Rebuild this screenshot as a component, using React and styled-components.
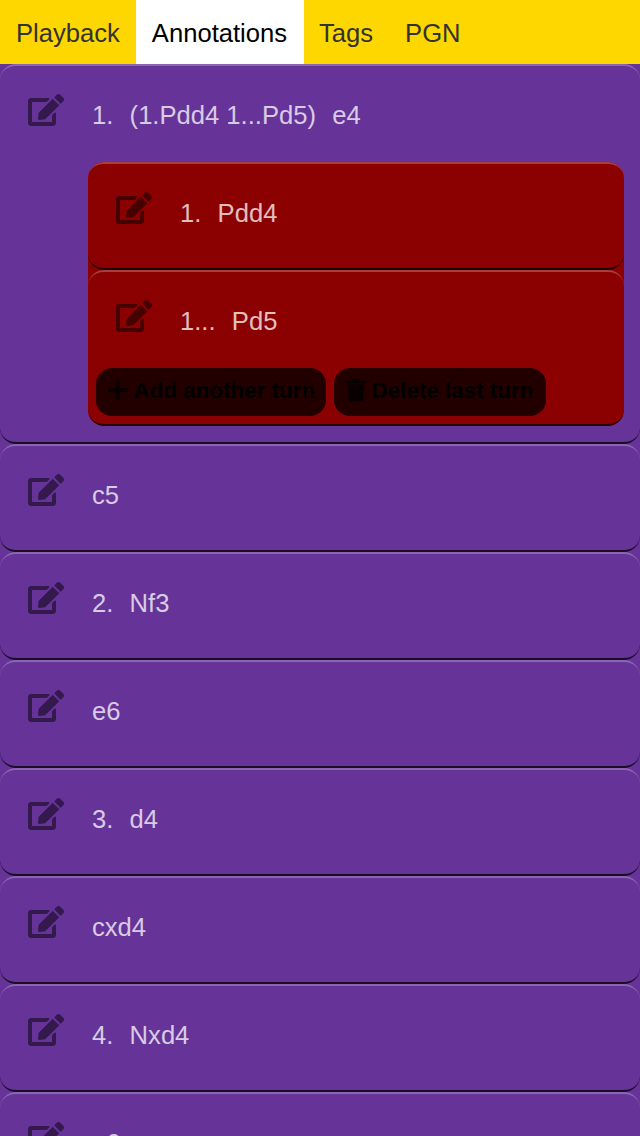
import React from 'react';
import styled, { createGlobalStyle } from 'styled-components';
import { FaEdit, FaPlus, FaTrash } from 'react-icons/fa';

const GlobalStyle = createGlobalStyle`
  * { box-sizing: border-box; }
  html, body { height: 100%; }
  body {
    margin: 0;
    overflow: hidden;
    background: #663399;
    font-family: "Liberation Sans", Arial, sans-serif;
    font-size: 25.6px;
    line-height: 32px;
  }
`;

const Page = styled.div`
  height: 1136px;
  overflow: hidden;
  background: #663399;
`;

const TabBar = styled.nav`
  display: flex;
  height: 64px;
  background: #ffd700;
`;

const Tab = styled.div`
  padding: 17px 16px 15px;
  color: ${(p) => (p.$active ? '#000' : '#333')};
  background: ${(p) => (p.$active ? '#fff' : 'transparent')};
  box-shadow: ${(p) => (p.$active ? '1px 0 0 #fff' : 'none')};
`;

const Turn = styled.section`
  border-top: 2px solid rgba(255, 255, 255, 0.25);
  border-bottom: 2px solid rgba(0, 0, 0, 0.75);
  border-radius: 16px;
`;

const TurnHeader = styled.div`
  display: flex;
  height: ${(p) => (p.$compact ? 96 : 104)}px;
`;

const EditButton = styled.div`
  width: 92px;
  padding: 28px;
  color: rgba(0, 0, 0, 0.5);

  svg {
    display: block;
    width: 36px;
    height: 32px;
  }
`;

const Moves = styled.div`
  display: flex;
  gap: 16.25px;
  padding-top: 33px;
  white-space: nowrap;
  color: rgba(255, 255, 255, 0.75);
`;

const Variation = styled.div`
  margin: 0 16px 16px 88px;
  border-radius: 16px;
  overflow: hidden;
  background: #8b0000;
`;

const Actions = styled.div`
  display: flex;
  gap: 8px;
  padding: 0 8px 8px;
`;

const ActionButton = styled.button`
  display: flex;
  align-items: center;
  width: ${(p) => p.$width}px;
  height: 48px;
  padding: 0 0 2px 12px;
  border: 0;
  border-radius: 16px;
  background: rgba(0, 0, 0, 0.75);
  color: #000;
  font: bold 22.4px/26px "Liberation Sans", Arial, sans-serif;
  white-space: nowrap;

  svg {
    flex: none;
    width: 19.6px;
    height: 22.4px;
    margin: 0 6px 2px 0;
    opacity: 0.75;
  }
`;

function TurnRow({ moves, compact, children }) {
  return (
    <Turn>
      <TurnHeader $compact={compact}>
        <EditButton><FaEdit /></EditButton>
        <Moves>{moves.map((m) => <span key={m}>{m}</span>)}</Moves>
      </TurnHeader>
      {children}
    </Turn>
  );
}

const tabs = ['Playback', 'Annotations', 'Tags', 'PGN'];
const turns = [['c5'], ['2.', 'Nf3'], ['e6'], ['3.', 'd4'], ['cxd4'], ['4.', 'Nxd4'], ['a6']];

export default function App() {
  return (
    <Page>
      <GlobalStyle />
      <TabBar>
        {tabs.map((t) => <Tab key={t} $active={t === 'Annotations'}>{t}</Tab>)}
      </TabBar>
      <TurnRow compact moves={['1.', '(1.Pdd4 1...Pd5)', 'e4']}>
        <Variation>
          <TurnRow moves={['1.', 'Pdd4']} />
          <TurnRow compact moves={['1...', 'Pd5']}>
            <Actions>
              <ActionButton $width={230}><FaPlus />Add another turn</ActionButton>
              <ActionButton $width={212}><FaTrash />Delete last turn</ActionButton>
            </Actions>
          </TurnRow>
        </Variation>
      </TurnRow>
      {turns.map((m) => <TurnRow key={m.join(' ')} moves={m} />)}
    </Page>
  );
}
